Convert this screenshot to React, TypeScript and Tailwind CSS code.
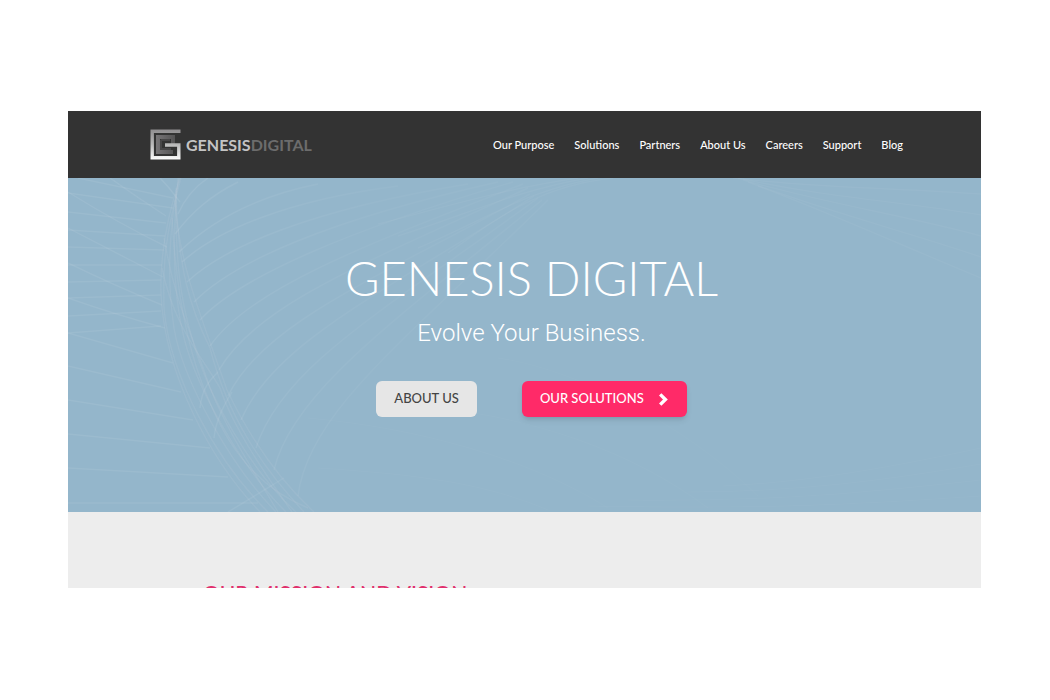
const navLinks = ['Our Purpose', 'Solutions', 'Partners', 'About Us', 'Careers', 'Support', 'Blog'];

const leftLines = [
  'M0 14 Q50 45 99 69',
  'M0 50 Q50 76 95 99',
  'M0 85 Q45 107 94 127',
  'M0 120 Q45 136 97 150',
  'M0 155 L105 185',
  'M0 188 L113 214',
  'M0 222 L125 242',
  'M0 256 L142 270',
  'M0 290 L160 299',
  'M0 325 L190 325',
  'M0 15 L105 30',
  'M0 34 L98 45',
  'M0 52 L97 58',
  'M0 69 L96 72',
  'M0 87 L94 87',
  'M0 104 L93 102',
  'M0 120 L93 117',
  'M0 138 L93 133',
  'M0 155 L93 148',
  'M10 0 L105 20',
  'M42 0 Q70 20 98 38',
];

const ribbon = [
  'M112 0 C98 42 92 80 93 115 C96 195 142 282 192 334',
  'M113 0 C96 60 95 90 96 130 C102 200 150 285 200 334',
  'M111 0 C99 60 100 110 106 150 C115 205 165 290 208 334',
  'M110 0 C103 70 106 120 116 160 C130 215 178 295 218 334',
  'M108 10 C107 80 112 120 124 160 C140 220 185 295 228 334',
  'M108 16 C110 90 122 130 142 170 C160 240 195 290 236 334',
  'M107 22 C111 90 136 145 159 212 C178 252 205 296 246 334',
  'M94 90 C106 150 135 180 152 210 C165 250 200 300 224 334',
  'M96 60 C108 130 126 160 142 210 C160 255 190 300 210 334',
  'M104 40 C108 110 118 170 140 220 C160 270 190 310 240 330',
];

const arcs = [
  'M92 0 C104 12 107 18 112 24',
  'M110 36 C118 18 128 8 140 0',
  'M107 56 C124 34 142 18 170 4',
  'M111 74 C138 48 180 20 250 6',
  'M114 84 C150 52 220 22 330 8',
  'M119 104 C155 70 240 32 400 6',
  'M126 124 C165 84 260 42 430 4',
  'M132 142 C170 100 280 52 445 4',
  'M142 168 C182 110 300 66 455 6',
  'M151 192 C190 124 310 80 460 10',
  'M160 218 C196 144 310 100 462 16',
  'M173 242 C206 164 320 112 466 18',
  'M188 270 C214 188 320 130 470 20',
  'M206 292 C224 214 330 140 474 22',
  'M230 318 C240 234 340 160 480 22',
  'M132 230 C134 210 142 202 150 194',
  'M146 260 C148 240 158 224 164 214',
  'M160 334 C190 316 206 306 216 300',
];

const farLines = [
  'M380 75 C430 40 470 8 545 0',
  'M350 70 C420 40 460 12 530 0',
  'M330 58 C400 36 450 12 520 0',
  'M310 46 C380 28 440 10 510 0',
  'M665 0 C750 10 830 10 913 16',
  'M670 0 C760 20 840 24 913 37',
  'M675 2 C760 26 840 38 913 58',
  'M680 4 C760 34 840 54 913 79',
  'M690 8 C760 34 840 70 913 100',
];

const bottomLines = [
  'M655 308 C740 304 820 290 913 270',
  'M620 314 C730 314 820 302 913 286',
  'M560 322 C720 324 820 312 913 302',
  'M520 328 C720 332 820 324 913 318',
  'M430 180 C500 190 610 240 690 318',
  'M370 230 C460 240 560 270 640 330',
  'M240 240 C350 250 460 280 540 330',
  'M250 290 C350 296 420 306 480 332',
];

function LogoMark() {
  return (
    <svg viewBox="0 0 31 31" className="size-[31px] shrink-0" fill="none" aria-hidden="true">
      <defs>
        <linearGradient id="outer" x1="0" y1="0" x2="0" y2="31" gradientUnits="userSpaceOnUse">
          <stop offset="0" stopColor="#8d8b8d" />
          <stop offset="0.5" stopColor="#b9b9b9" />
          <stop offset="1" stopColor="#ffffff" />
        </linearGradient>
        <linearGradient id="inner" x1="6" y1="0" x2="25" y2="0" gradientUnits="userSpaceOnUse">
          <stop offset="0" stopColor="#777577" />
          <stop offset="1" stopColor="#545354" />
        </linearGradient>
      </defs>
      <path d="M23 15 V8 H8 V23 H23" stroke="url(#inner)" strokeWidth="4" />
      <path d="M11 11 H20 M11 11 V20 H21" stroke="#474647" strokeWidth="2" />
      <path d="M30.5 2.2 H2.2 V28.8 H28.8 V16 H15" stroke="url(#outer)" strokeWidth="3.4" />
    </svg>
  );
}

function Header() {
  return (
    <header className="flex items-center justify-between bg-[#333333] h-[67px] pl-[82px] pr-[78px]">
      <a href="#" className="flex items-center gap-[5px]">
        <LogoMark />
        <span className="text-base leading-5 font-bold text-[#c4c4c4]">
          GENESIS<span className="text-[#6c6c6c]">DIGITAL</span>
        </span>
      </a>
      <nav className="flex gap-5">
        {navLinks.map((link) => (
          <a key={link} href="#" className="text-[11px] leading-4 font-medium text-white hover:text-[#ff2a68]">
            {link}
          </a>
        ))}
      </nav>
    </header>
  );
}

function HeroLines() {
  return (
    <svg
      viewBox="0 0 913 334"
      preserveAspectRatio="xMinYMin slice"
      className="absolute inset-0 size-full"
      fill="none"
      stroke="#ffffff"
      strokeWidth="1.4"
      aria-hidden="true"
    >
      <defs>
        <linearGradient id="fade" x1="100" y1="0" x2="480" y2="0" gradientUnits="userSpaceOnUse">
          <stop offset="0" stopColor="#ffffff" stopOpacity="0.08" />
          <stop offset="0.55" stopColor="#ffffff" stopOpacity="0.03" />
          <stop offset="1" stopColor="#ffffff" stopOpacity="0.03" />
        </linearGradient>
      </defs>
      <g strokeOpacity="0.07">{leftLines.map((d) => <path key={d} d={d} />)}</g>
      <g stroke="#c3cde0" strokeOpacity="0.15">{ribbon.map((d) => <path key={d} d={d} />)}</g>
      <g stroke="url(#fade)">{arcs.map((d) => <path key={d} d={d} />)}</g>
      <g strokeOpacity="0.04">{farLines.map((d) => <path key={d} d={d} />)}</g>
      <g strokeOpacity="0.02">{bottomLines.map((d) => <path key={d} d={d} />)}</g>
    </svg>
  );
}

function Hero() {
  return (
    <section className="relative overflow-hidden bg-[#94b6cb] pt-[70px] pb-[95px] pl-[14px]">
      <HeroLines />
      <div className="relative flex flex-col items-center text-white">
        <h1 className="text-[47px] leading-[60px] font-light">GENESIS DIGITAL</h1>
        <p className="mt-[9px] text-2xl leading-8 font-light font-['Roboto',sans-serif]">Evolve Your Business.</p>
        <div className="mt-8 flex gap-[45px]">
          <a
            href="#"
            className="flex items-center h-9 px-[18px] rounded-md bg-[#e6e6e6] text-[13px] font-medium text-[#444444]"
          >
            ABOUT US
          </a>
          <a
            href="#"
            className="flex items-center gap-[14px] h-9 px-[18px] rounded-md bg-[#ff2a68] text-[13px] font-medium text-white shadow-md"
          >
            OUR SOLUTIONS
            <svg viewBox="0 0 11 13" className="w-[11px] h-[13px]" fill="none" stroke="currentColor" strokeWidth="3.4" aria-hidden="true">
              <path d="M2.2 1.4 L7.4 6.5 L2.2 11.6" />
            </svg>
          </a>
        </div>
      </div>
    </section>
  );
}

function Mission() {
  return (
    <section className="h-[76px] overflow-hidden bg-[#ededed] pt-[67px] px-[135px]">
      <h2 className="text-[21px] leading-7 font-medium text-[#e0306c]">OUR MISSION AND VISION</h2>
    </section>
  );
}

export default function App() {
  return (
    <div className="min-h-screen bg-white pt-[111px] pl-[68px] pr-[69px] font-['Lato',sans-serif]">
      <Header />
      <main>
        <Hero />
        <Mission />
      </main>
    </div>
  );
}
